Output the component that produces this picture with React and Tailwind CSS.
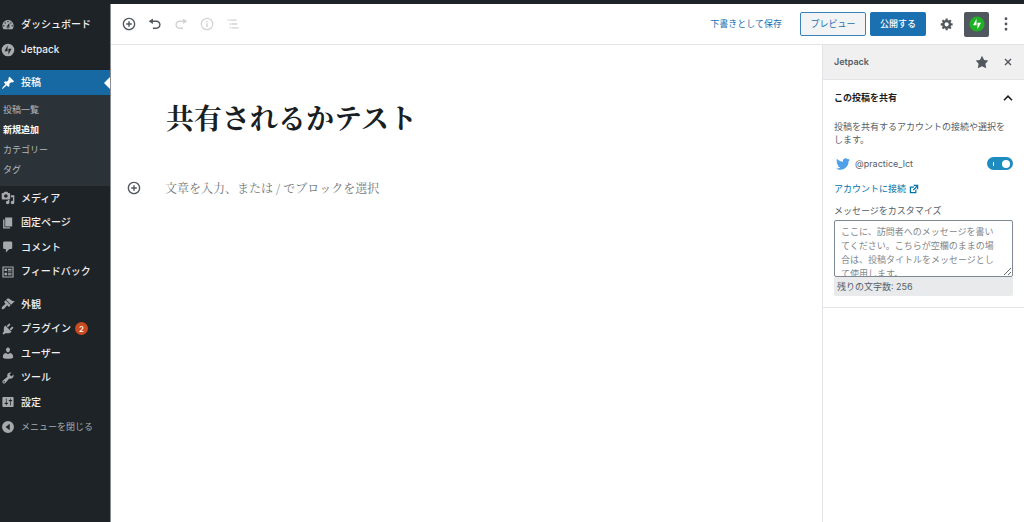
import React from 'react';
import { FaTwitter } from 'react-icons/fa';

const PATHS = {
  dashboard:
    'M3.76 16h12.48c1.1-1.37 1.76-3.11 1.76-5 0-4.42-3.58-8-8-8s-8 3.58-8 8c0 1.89.66 3.63 1.76 5zM10 4c.55 0 1 .45 1 1s-.45 1-1 1-1-.45-1-1 .45-1 1-1zM6 6c.55 0 1 .45 1 1s-.45 1-1 1-1-.45-1-1 .45-1 1-1zm8 0c.55 0 1 .45 1 1s-.45 1-1 1-1-.45-1-1 .45-1 1-1zm-5.37 5.55L12 7v6c0 1.1-.9 2-2 2s-2-.9-2-2c0-.57.24-1.08.63-1.45zM4 10c.55 0 1 .45 1 1s-.45 1-1 1-1-.45-1-1 .45-1 1-1zm12 0c.55 0 1 .45 1 1s-.45 1-1 1-1-.45-1-1 .45-1 1-1zm-5 3c0-.55-.45-1-1-1s-1 .45-1 1 .45 1 1 1 1-.45 1-1z',
  jetpack:
    'M10 1a9 9 0 1 0 0 18 9 9 0 0 0 0-18zM9.4 11.7H5l4.4-8.2v8.2zm1.2 4.8V8.3H15l-4.4 8.2z',
  post: 'M10.44 3.02l1.82-1.82 6.36 6.35-1.83 1.82c-1.05-.68-2.48-.57-3.41.36l-.75.75c-.92.93-1.04 2.35-.35 3.41l-1.83 1.82-2.41-2.41-2.8 2.79c-.42.42-3.38 2.71-3.8 2.29s1.86-3.39 2.28-3.81l2.79-2.79L4.1 9.36l1.83-1.82c1.05.69 2.48.57 3.4-.36l.75-.75c.93-.92 1.05-2.35.36-3.41z',
  media:
    'M13 11V4c0-.55-.45-1-1-1h-1.67L9 1H5L3.67 3H2c-.55 0-1 .45-1 1v7c0 .55.45 1 1 1h10c.55 0 1-.45 1-1zM7 4.5c1.38 0 2.5 1.12 2.5 2.5S8.38 9.5 7 9.5 4.5 8.38 4.5 7 5.62 4.5 7 4.5zM14 6h5v10.5c0 1.38-1.12 2.5-2.5 2.5S14 17.88 14 16.5s1.12-2.5 2.5-2.5c.17 0 .34.02.5.05V9h-3V6zm-4 8.05V13h2v3.5c0 1.38-1.12 2.5-2.5 2.5S7 17.88 7 16.5 8.12 14 9.5 14c.17 0 .34.02.5.05z',
  page: 'M6 15V2h10v13H6zm-1 1h8v2H3V5h2v11z',
  comment:
    'M5 2h9q.82 0 1.41.59T16 4v7q0 .82-.59 1.41T14 13h-2l-5 5v-5H5q-.82 0-1.41-.59T3 11V4q0-.82.59-1.41T5 2z',
  feedback:
    'M2 2h16v16H2V2zm1.7 1.7v12.6h12.6V3.7H3.7zM5 5.5h3.5v3.2H5V5.5zm4.8 0H15V7H9.8V5.5zm0 2.3H15v1.4H9.8V7.8zM5 11h3.500v3.500H5V11zm4.800 0H15v1.400H9.800V11zm0 2.300H15v1.400H9.800v-1.400z',
  appearance:
    'M14.48 11.06L7.41 3.99l1.5-1.5c.5-.56 2.3-.47 3.51.32 1.21.8 1.43 1.28 2.91 2.1 1.18.64 2.45 1.26 4.45.85zm-.71.71L6.7 4.7 4.93 6.47c-.39.39-.39 1.02 0 1.41l1.06 1.06c.39.39.39 1.03 0 1.42-.6.6-1.43 1.11-2.21 1.69-.35.26-.7.53-1.01.84C1.43 14.23.4 16.08 1.4 17.07c.99 1 2.84-.03 4.18-1.36.31-.31.58-.66.85-1.02.57-.78 1.08-1.61 1.69-2.21.39-.39 1.02-.39 1.41 0l1.06 1.06c.39.39 1.02.39 1.41 0z',
  plugins:
    'M13.11 4.36L9.87 7.6 8 5.73l3.24-3.24c.35-.34 1.05-.2 1.56.32.52.51.66 1.21.31 1.55zm-8 1.77l.91-1.12 9.01 9.01-1.19.84c-.71.71-2.63 1.16-3.82 1.16H6.14L4.9 17.26c-.59.59-1.54.59-2.12 0-.59-.58-.59-1.53 0-2.12l1.24-1.24v-3.88c0-1.13.4-3.19 1.09-3.89zm7.26 3.97l3.24-3.24c.34-.35 1.04-.21 1.55.31.52.51.66 1.21.31 1.55l-3.24 3.25z',
  users:
    'M10 9.25c-2.27 0-2.73-3.44-2.73-3.44C7 4.02 7.82 2 9.97 2c2.16 0 2.98 2.02 2.71 3.81 0 0-.41 3.44-2.68 3.44zm0 2.57L12.72 10c2.39 0 4.52 2.33 4.52 4.53v2.49s-3.65 1.13-7.24 1.13c-3.65 0-7.24-1.13-7.24-1.13v-2.49c0-2.25 1.94-4.48 4.47-4.48z',
  tools:
    'M16.68 9.77c-1.34 1.34-3.3 1.67-4.95.99l-5.41 6.52c-.99.99-2.59.99-3.58 0s-.99-2.59 0-3.57l6.52-5.42c-.68-1.65-.35-3.61.99-4.95 1.28-1.28 3.12-1.62 4.72-1.06l-2.89 2.89 2.82 2.82 2.86-2.87c.53 1.58.18 3.39-1.08 4.65zM3.81 16.21c.4.39 1.04.39 1.43 0 .4-.4.4-1.04 0-1.43-.39-.4-1.03-.4-1.43 0-.39.39-.39 1.03 0 1.43z',
  settings:
    'M18 16V4c0-.55-.45-1-1-1H3c-.55 0-1 .45-1 1v12c0 .55.45 1 1 1h14c.55 0 1-.45 1-1zM8 11h1c.55 0 1 .45 1 1s-.45 1-1 1H8v1.5c0 .28-.22.5-.5.5s-.5-.22-.5-.5V13H6c-.55 0-1-.45-1-1s.45-1 1-1h1V5.5c0-.28.22-.5.5-.5s.5.22.5.5V11zm5-2h-1c-.55 0-1-.45-1-1s.45-1 1-1h1V5.5c0-.28.22-.5.5-.5s.5.22.5.5V7h1c.55 0 1 .45 1 1s-.45 1-1 1h-1v5.5c0 .28-.22.5-.5.5s-.5-.22-.5-.5V9z',
  collapse: 'M10 1.500a8.500 8.500 0 1 0 0 17 8.500 8.500 0 0 0 0-17zM12.500 5.500v9L6.500 10l6-4.500z',
  insert:
    'M10 1c-5 0-9 4-9 9s4 9 9 9 9-4 9-9-4-9-9-9zm0 16c-3.9 0-7-3.1-7-7s3.1-7 7-7 7 3.1 7 7-3.1 7-7 7zm1-11H9v3H6v2h3v3h2v-3h3V9h-3V6z',
  undo: 'M12 5H7V2L1 6l6 4V7h5c2.2 0 4 1.8 4 4s-1.8 4-4 4H7v2h5c3.3 0 6-2.7 6-6s-2.7-6-6-6z',
  redo: 'M8 5h5V2l6 4-6 4V7H8c-2.2 0-4 1.8-4 4s1.8 4 4 4h5v2H8c-3.3 0-6-2.7-6-6s2.7-6 6-6z',
  info: 'M10 1a9 9 0 1 0 0 18 9 9 0 0 0 0-18zm0 1.700a7.300 7.300 0 1 1 0 14.600 7.300 7.300 0 0 1 0-14.600zM9 5.500h2v2H9v-2zM9 9h2v5.500H9V9z',
  list: 'M2 3.500h2v2H2v-2zm3 0h10v2H5v-2zM5 9h2v2H5V9zm3 0h8v2H8V9zM5 14.500h2v2H5v-2zm3 0h10v2H8v-2z',
  gear: 'M18 12h-2.18c-.17.7-.44 1.35-.81 1.93l1.54 1.54-2.1 2.1-1.54-1.54c-.58.36-1.23.63-1.91.79V19H8v-2.18c-.68-.16-1.33-.43-1.91-.79l-1.54 1.54-2.12-2.12 1.54-1.54c-.36-.58-.63-1.23-.79-1.91H1V9.03h2.17c.16-.7.44-1.35.8-1.94L2.43 5.55l2.1-2.1 1.54 1.54c.58-.37 1.24-.64 1.93-.81V2h3v2.18c.68.16 1.33.43 1.91.79l1.54-1.54 2.12 2.12-1.54 1.54c.36.59.64 1.24.8 1.94H18V12zm-8.5 1.5c1.66 0 3-1.34 3-3s-1.34-3-3-3-3 1.34-3 3 1.34 3 3 3z',
  star: 'M10 1l3 6 6 .75-4.12 4.62L16 19l-6-3-6 3 1.13-6.63L1 7.75 7 7z',
  close:
    'M14.95 6.46L11.41 10l3.54 3.54-1.41 1.41L10 11.42l-3.53 3.53-1.42-1.42L8.58 10 5.05 6.47l1.42-1.42L10 8.58l3.54-3.53z',
  dots: 'M10 .5a2 2 0 1 0 0 4 2 2 0 0 0 0-4zm0 7.500a2 2 0 1 0 0 4 2 2 0 0 0 0-4zm0 7.500a2 2 0 1 0 0 4 2 2 0 0 0 0-4z',
  external:
    'M9 3h8v8l-2-1V6.92l-5.6 5.59-1.41-1.41L14.08 5H10zm3 12v-3l2-2v7H3V6h8L9 8H5v7h7z',
};

function Icon({ name, className = 'size-3.5' }) {
  return (
    <svg viewBox="0 0 20 20" fill="currentColor" fillRule="evenodd" aria-hidden="true" className={`shrink-0 ${className}`}>
      <path d={PATHS[name]} />
    </svg>
  );
}

function MenuItem({ icon, label, badge, current, muted }) {
  const tone = current
    ? 'bg-[#1769a3] text-[10px] font-medium text-white'
    : muted
      ? 'text-[9px] text-[#a7aaad]'
      : 'text-[10px] font-medium text-[#f0f0f1]';
  return (
    <li className="relative flex">
      <a href="#" className={`flex flex-1 items-center pl-px ${tone}`}>
        <Icon name={icon} className={`mr-1.5 size-3.5 ${current ? 'text-white' : 'text-[#a7aaad]'}`} />
        <span>{label}</span>
        {badge && (
          <span className="ml-1 flex size-[13px] items-center justify-center rounded-full bg-[#ca4a1f] text-[8px] text-white">
            {badge}
          </span>
        )}
      </a>
      {current && (
        <span className="absolute top-1/2 right-0 -translate-y-1/2 border-y-[6px] border-r-[6px] border-y-transparent border-r-white" />
      )}
    </li>
  );
}

function Sidebar() {
  return (
    <nav aria-label="メインメニュー" className="w-[111px] shrink-0 border-r border-[#8a8c8f] bg-[#1d2327] pt-2">
      <ul className="grid h-[50px] auto-rows-fr">
        <MenuItem icon="dashboard" label="ダッシュボード" />
        <MenuItem icon="jetpack" label="Jetpack" />
      </ul>
      <ul className="mt-2 grid h-[25px]">
        <MenuItem icon="post" label="投稿" current />
      </ul>
      <ul className="bg-[#2c3338] pt-[5px] pb-1.5 pl-[3px] text-[9px] leading-5 text-[#b4b9be]">
        <li><a href="#">投稿一覧</a></li>
        <li><a href="#" className="font-bold text-white">新規追加</a></li>
        <li><a href="#">カテゴリー</a></li>
        <li><a href="#">タグ</a></li>
      </ul>
      <ul className="grid h-[98px] auto-rows-fr">
        <MenuItem icon="media" label="メディア" />
        <MenuItem icon="page" label="固定ページ" />
        <MenuItem icon="comment" label="コメント" />
        <MenuItem icon="feedback" label="フィードバック" />
      </ul>
      <ul className="mt-2 grid h-[147px] auto-rows-fr">
        <MenuItem icon="appearance" label="外観" />
        <MenuItem icon="plugins" label="プラグイン" badge="2" />
        <MenuItem icon="users" label="ユーザー" />
        <MenuItem icon="tools" label="ツール" />
        <MenuItem icon="settings" label="設定" />
        <MenuItem icon="collapse" label="メニューを閉じる" muted />
      </ul>
    </nav>
  );
}

function ToolButton({ icon, label, disabled }) {
  return (
    <button
      type="button"
      aria-label={label}
      disabled={disabled}
      className={`flex size-[26px] items-center justify-center ${disabled ? 'text-[#d0d2d4]' : 'text-[#50575e]'}`}
    >
      <Icon name={icon} />
    </button>
  );
}

function Toolbar() {
  return (
    <header className="flex h-[41px] items-center justify-between border-b border-[#e2e4e7] px-[5px]">
      <div className="flex">
        <ToolButton icon="insert" label="ブロックを追加" />
        <ToolButton icon="undo" label="元に戻す" />
        <ToolButton icon="redo" label="やり直し" disabled />
        <ToolButton icon="info" label="コンテンツ構造" disabled />
        <ToolButton icon="list" label="ブロックナビゲーション" disabled />
      </div>
      <div className="flex items-center text-[9px]">
        <button type="button" className="mr-[18px] text-[#2271b1]">下書きとして保存</button>
        <button type="button" className="mr-1 h-6 w-[66px] rounded-xs border border-[#3a80b9] bg-[#f1f3f5] text-[#2271b1]">
          プレビュー
        </button>
        <button type="button" className="mr-2 h-6 w-14 rounded-xs bg-[#1a70b0] font-medium text-white">公開する</button>
        <ToolButton icon="gear" label="設定" />
        <button type="button" aria-label="Jetpack" className="mx-1 flex size-[25px] items-center justify-center rounded-xs bg-[#50575e]">
          <svg viewBox="0 0 20 20" className="size-4" aria-hidden="true">
            <circle cx="10" cy="10" r="9.500" fill="#1fb125" />
            <path d="M9.400 11.700H5l4.400-8.200v8.200zM10.600 16.500V8.300H15l-4.400 8.200z" fill="#fff" />
          </svg>
        </button>
        <ToolButton icon="dots" label="ツールと設定をさらに表示" />
      </div>
    </header>
  );
}

function Editor() {
  return (
    <main className="min-w-0 flex-1 pt-[50px] pr-6 pl-2.5 font-['Noto_Serif_CJK_JP','Noto_Serif_JP','Liberation_Serif','Noto_Sans_CJK_JP',serif]">
      <input
        aria-label="タイトルを追加"
        defaultValue="共有されるかテスト"
        className="ml-[45px] block h-11 w-4/5 text-[28px] font-bold text-[#191e23] outline-none"
      />
      <div className="mt-9 flex items-center gap-[18px] text-[#50575e]">
        <ToolButton icon="insert" label="ブロックを追加" />
        <input
          aria-label="ブロック"
          placeholder="文章を入力、または / でブロックを選択"
          className="h-6 flex-1 pb-0.5 text-[12px] outline-none placeholder:text-[#72777c]"
        />
      </div>
    </main>
  );
}

function JetpackPanel() {
  return (
    <aside className="w-[202px] shrink-0 border-l border-[#e2e4e7] text-[9px] text-[#555d66]">
      <div className="flex h-[35px] items-center border-b border-[#e2e4e7] bg-[#f0f0f1] pr-[3px] pl-[11px]">
        <h2 className="flex-1 font-semibold">Jetpack</h2>
        <ToolButton icon="star" label="ツールバーから固定を解除" />
        <ToolButton icon="close" label="閉じる" />
      </div>
      <section className="border-b border-[#e2e4e7] px-[11px] pb-[11px]">
        <h3>
          <button type="button" aria-expanded="true" className="flex h-[35px] w-full items-center justify-between font-bold text-[#191e23]">
            この投稿を共有
            <svg viewBox="0 0 10 10" className="size-2.5" fill="none" stroke="currentColor" strokeWidth="1.600" aria-hidden="true">
              <path d="M1 7.200 5 3.200l4 4" />
            </svg>
          </button>
        </h3>
        <p className="mt-[5px] leading-[13px]">投稿を共有するアカウントの接続や選択をします。</p>
        <label className="mt-2.5 flex h-[15px] items-center">
          <FaTwitter className="ml-0.5 size-3.5 text-[#4f9fea]" aria-hidden="true" />
          <span className="ml-[5px] flex-1">@practice_lct</span>
          <input type="checkbox" role="switch" defaultChecked className="peer sr-only" />
          <span className="flex h-[13px] w-[26px] items-center justify-between rounded-full bg-[#1e8cbe] pr-[3px] pl-1.5">
            <span className="h-1 w-px bg-white" />
            <span className="size-2 rounded-full bg-white" />
          </span>
        </label>
        <a href="#" className="mt-2.5 flex h-[15px] items-center gap-0.5 text-[#0073aa]">
          アカウントに接続
          <Icon name="external" className="size-3" />
        </a>
        <label htmlFor="message" className="mt-2 block leading-[14px]">メッセージをカスタマイズ</label>
        <textarea
          id="message"
          placeholder="ここに、訪問者へのメッセージを書いてください。こちらが空欄のままの場合は、投稿タイトルをメッセージとして使用します。"
          className="mt-0.5 block h-[57px] w-full resize overflow-hidden rounded-xs border border-[#7e8993] py-1 pr-3 pl-1.5 leading-[14px] placeholder:text-[#82878c]"
        />
        <div className="rounded-b-xs bg-[#e8eaeb] pl-[3px] leading-[19px]">残りの文字数: 256</div>
      </section>
    </aside>
  );
}

export default function App() {
  return (
    <div lang="ja" className="flex min-h-screen flex-col bg-white font-['Inter','Noto_Sans_CJK_JP',sans-serif]">
      <div className="h-1 bg-[#1d2327]" />
      <div className="flex flex-1">
        <Sidebar />
        <div className="flex min-w-0 flex-1 flex-col">
          <Toolbar />
          <div className="flex flex-1">
            <Editor />
            <JetpackPanel />
          </div>
        </div>
      </div>
    </div>
  );
}
